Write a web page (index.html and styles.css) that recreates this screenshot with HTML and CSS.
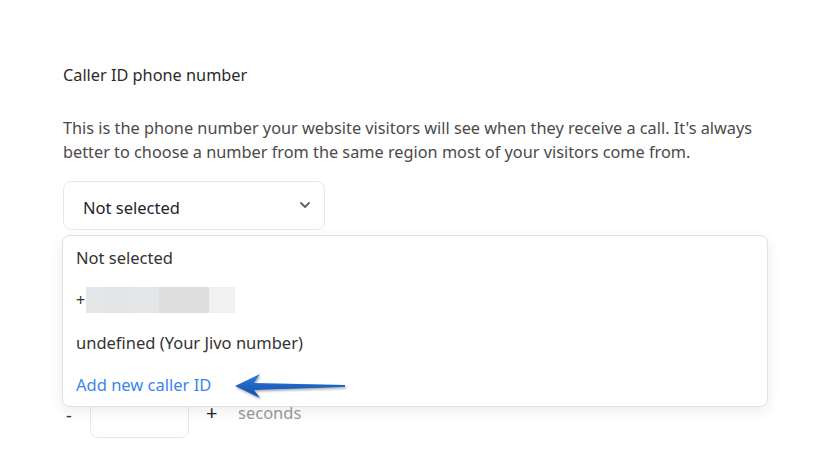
FILE: index.html
```html
<!DOCTYPE html>
<html>
<head>
<meta charset="utf-8">
<link rel="stylesheet" href="styles.css">
</head>
<body>
<div class="page">
  <h2 class="title">Caller ID phone number</h2>
  <p class="desc">This is the phone number your website visitors will see when they receive a call. It's always better to choose a number from the same region most of your visitors come from.</p>
  <div class="select-wrap">
    <div class="select">
      <span class="sel-text">Not selected</span>
      <svg class="chev" width="12" height="8" viewBox="0 0 12 8"><path d="M2 2 L6 6 L10 2" fill="none" stroke="#5a6270" stroke-width="1.8" stroke-linecap="round" stroke-linejoin="round"/></svg>
    </div>
    <div class="menu">
      <div class="item">Not selected</div>
      <div class="item phone"><span>+</span><span class="blur"><i class="b1"></i><i class="b2"></i><i class="b3"></i><i class="b4"></i><i class="b5"></i></span></div>
      <div class="item">undefined (Your Jivo number)</div>
      <div class="item add">Add new caller ID</div>
    </div>
    <svg class="arrow" width="120" height="30" viewBox="0 0 120 30">
      <defs>
        <linearGradient id="g" x1="0" y1="0" x2="0" y2="1">
          <stop offset="0" stop-color="#2f7ad8"/>
          <stop offset="1" stop-color="#0f4fa8"/>
        </linearGradient>
        <filter id="s" x="-10%" y="-30%" width="120%" height="160%">
          <feDropShadow dx="1" dy="1.5" stdDeviation="0.8" flood-color="#000" flood-opacity="0.35"/>
        </filter>
      </defs>
      <path d="M3 14 L28 2 L22 11 L113 13 L113 15 L22 18 L28 26 Z" fill="url(#g)" filter="url(#s)"/>
    </svg>
  </div>
  <div class="stepper">
    <span class="minus">-</span>
    <div class="num"></div>
    <span class="plus">+</span>
    <span class="sec">seconds</span>
  </div>
</div>
</body>
</html>
```
FILE: styles.css
```css
html, body { margin: 0; padding: 0; background: #fff; }
body { font-family: "Noto Sans", "Open Sans", sans-serif; color: #333; }
.page { padding: 63px 0 0 63px; width: 740px; }
.title { font-size: 16.3px; font-weight: 400; margin: 0; line-height: 24px; color: #2b2b2b; }
.desc { font-size: 16.3px; line-height: 24px; margin: 29px 0 0; color: #4a4a4a; width: 720px; }
.select-wrap { position: relative; margin-top: 17px; }
.select { width: 262px; height: 49px; box-sizing: border-box; border: 1px solid #e7e8ea; border-radius: 8px; display: flex; align-items: center; justify-content: space-between; padding: 0 13px 0 19px; font-size: 16.5px; color: #1f2430; }
.sel-text { padding-top: 4px; }
.chev { margin-top: -2px; }
.menu { position: absolute; left: -1px; top: 54px; width: 706px; height: 172px; box-sizing: border-box; background: #fff; border: 1px solid #e2e2e2; border-radius: 8px; box-shadow: 0 4px 14px rgba(0,0,0,0.08); padding: 0 0 0 13px; z-index: 2; }
.item { height: 42.5px; display: flex; align-items: center; font-size: 16.5px; color: #333; }
.add { color: #3b86ea; }
.phone span:first-child { font-size: 16px; }
.blur { display: flex; height: 26px; margin-left: 1px; }
.blur i { display: block; height: 100%; }
.b1 { width: 19px; background: #e6e7e8; }
.b2 { width: 26px; background: #e4e5e6; }
.b3 { width: 28px; background: #e5e6e7; }
.b4 { width: 50px; background: #dedede; }
.b5 { width: 26px; background: #f1f1f1; }
.arrow { position: absolute; left: 169px; top: 191px; z-index: 3; }
.stepper { display: flex; align-items: flex-start; margin-top: 171px; }
.minus { width: 24px; padding-left: 3px; padding-top: 2px; font-size: 18px; line-height: 24px; color: #333; }
.num { width: 99px; height: 43px; box-sizing: border-box; border: 1px solid #e7e8ea; border-radius: 8px; margin-top: -6px; }
.plus { margin-left: 17px; width: 32px; font-size: 20px; line-height: 24px; color: #222; }
.sec { font-size: 16.5px; line-height: 24px; color: #9a9a9a; }
```
